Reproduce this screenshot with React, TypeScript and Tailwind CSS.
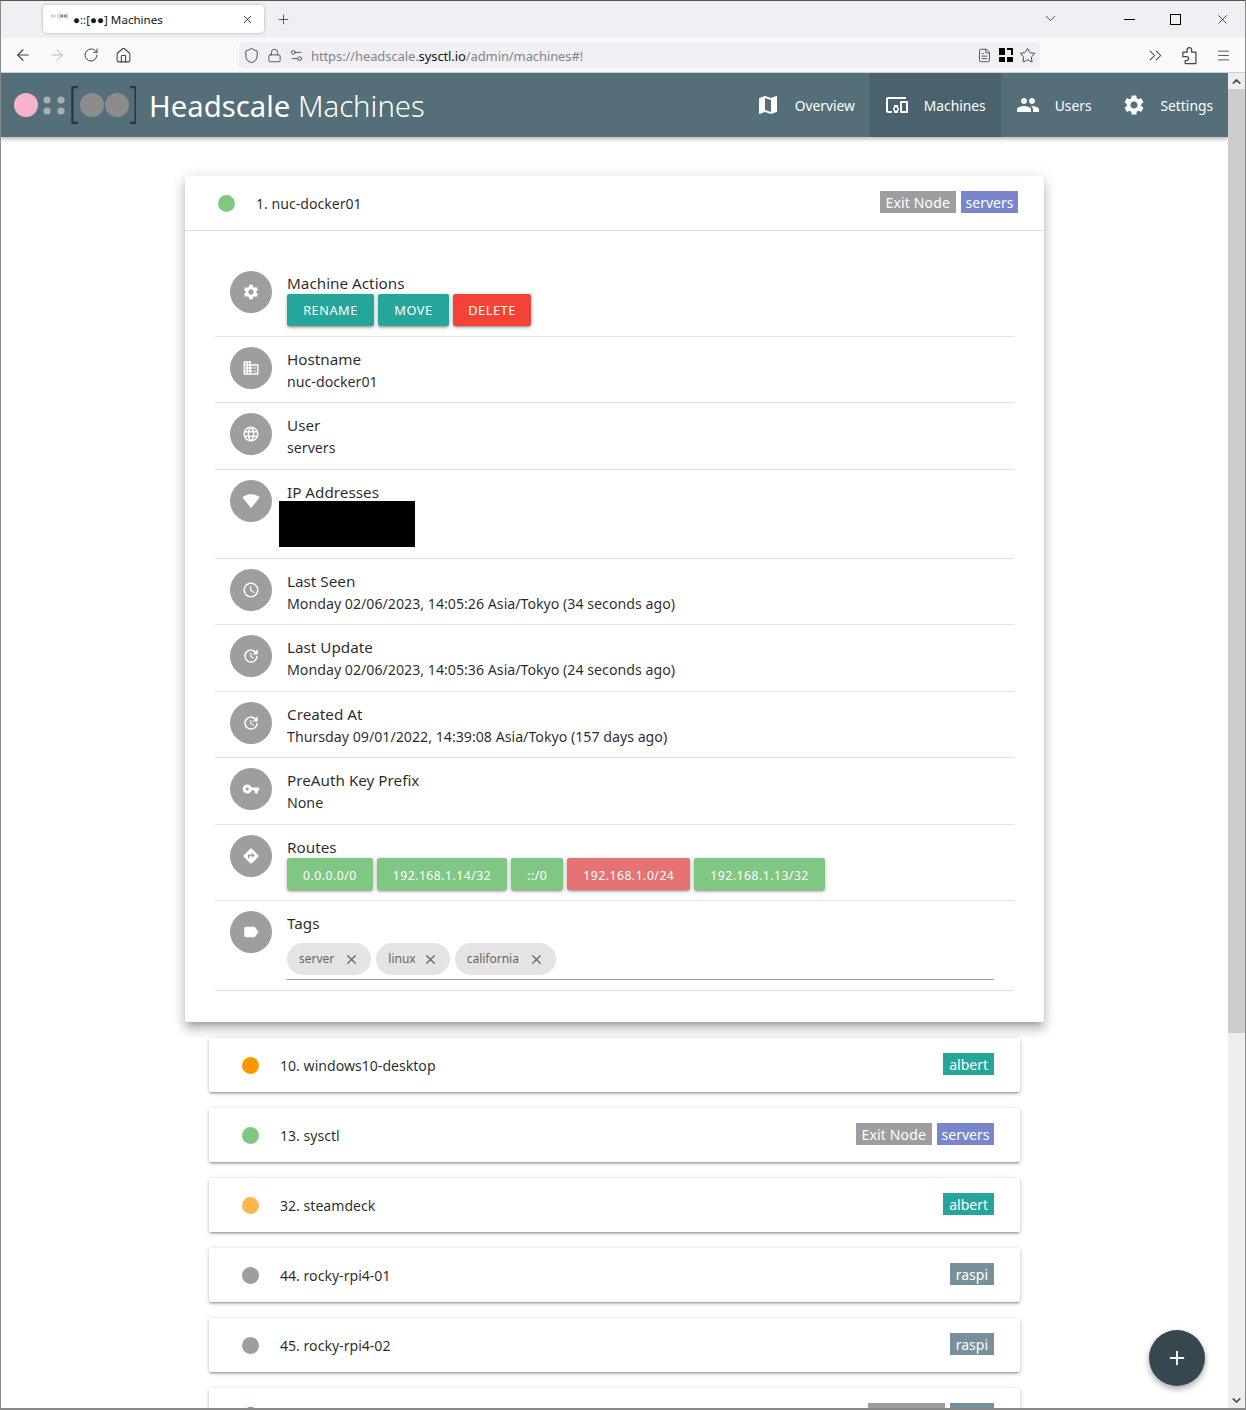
import type { ReactNode } from 'react';
import {
  ArrowLeft,
  ArrowRight,
  ChevronDown,
  ChevronUp,
  ChevronsRight,
  FileText,
  House,
  Lock,
  Menu,
  Plus,
  RotateCw,
  Settings2,
  Shield,
  Star,
  X,
} from 'lucide-react';
import {
  MdAccessTime,
  MdDevicesOther,
  MdDirections,
  MdDomain,
  MdGroup,
  MdLabel,
  MdLanguage,
  MdMap,
  MdSettings,
  MdSignalWifi4Bar,
  MdUpdate,
  MdVpnKey,
} from 'react-icons/md';

function Logo({ className }: { className: string }) {
  return (
    <svg viewBox="0 0 122 38" className={className}>
      <circle cx="12" cy="19" r="12" fill="#f8b3cc" />
      <circle cx="33" cy="14" r="3.6" fill="#a9aeb0" />
      <circle cx="33" cy="25" r="3.6" fill="#a9aeb0" />
      <circle cx="47" cy="14" r="3.6" fill="#a9aeb0" />
      <circle cx="47" cy="25" r="3.6" fill="#a9aeb0" />
      <path d="M64 1.2h-5.6v35.6H64M116 1.2h5.6v35.6H116" fill="none" stroke="#333" strokeWidth="2.2" />
      <circle cx="78" cy="19" r="12" fill="#8c8c8c" />
      <circle cx="103" cy="19" r="12" fill="#8c8c8c" />
    </svg>
  );
}

function ExtensionIcon() {
  return (
    <svg viewBox="0 0 18 20" className="ml-[15px] h-[19px] w-[17px]" fill="none" stroke="currentColor" strokeWidth="1.3">
      <path d="M2 6.5h4.5V4a2.4 2.4 0 0 1 4.8 0v2.5h4.5v12H4.5v-3.2H6a2 2 0 0 0 0-4H2z" strokeLinejoin="round" />
    </svg>
  );
}

function BrowserChrome() {
  return (
    <>
      <div className="flex h-[37px] items-start bg-[#f0f0f4]">
        <div className="ml-[42px] mt-[4px] flex h-[28px] w-[221px] items-center rounded bg-white pl-[8px] pr-[10px] shadow-[0_0_3px_rgba(0,0,0,0.3)]">
          <Logo className="mb-[6px] h-[6px] w-[17px]" />
          <span className="ml-[5px] flex-1 pt-[2px] text-[11.6px] text-[#15141a]">●::[●●] Machines</span>
          <X size={13} strokeWidth={1.5} className="text-[#15141a]" />
        </div>
        <Plus size={15} strokeWidth={1.4} className="ml-[12px] mt-[11px] text-[#45444c]" />
        <ChevronDown size={17} strokeWidth={1.2} className="ml-[751px] mt-[9px] text-[#333]" />
        <div className="ml-[65px] mt-[18px] h-[1px] w-[11px] bg-black" />
        <div className="ml-[35px] mt-[13px] h-[11px] w-[11px] border border-black" />
        <X size={15} strokeWidth={1.1} className="ml-[34px] mt-[11px] text-black" />
      </div>
      <div className="flex h-[34px] items-center bg-[#f9f9fb] text-[#45444c]">
        <ArrowLeft size={18} strokeWidth={1.5} className="ml-[13px]" />
        <ArrowRight size={18} strokeWidth={1.3} className="ml-[16px] text-[#b6b6ba]" />
        <RotateCw size={16} strokeWidth={1.5} className="ml-[17px]" />
        <House size={17} strokeWidth={1.5} className="ml-[16px]" />
        <div className="ml-[107px] flex h-[26px] w-[801px] items-center rounded bg-[#f0f0f4]">
          <Shield size={17} strokeWidth={1.4} className="ml-[4px]" />
          <Lock size={15} strokeWidth={1.4} className="ml-[7px]" />
          <Settings2 size={15} strokeWidth={1.4} className="ml-[7px]" />
          <span className="ml-[7px] flex-1 pt-[3px] text-[13px] tracking-[-0.1px] text-[#83838a]">
            https://headscale.<span className="text-[#15141a]">sysctl.io</span>/admin/machines#!
          </span>
          <FileText size={15} strokeWidth={1.4} />
          <div className="ml-[7px] grid h-[14px] w-[14px] grid-cols-2 gap-[2px]">
            <span className="bg-black" />
            <span className="border-r-2 border-t-2 border-black" />
            <span className="bg-black" />
            <span className="bg-black" />
          </div>
          <Star size={17} strokeWidth={1.4} className="ml-[6px] mr-[4px]" />
        </div>
        <ChevronsRight size={21} strokeWidth={1.2} className="ml-[105px]" />
        <ExtensionIcon />
        <Menu size={15} strokeWidth={1.4} className="ml-[18px]" />
      </div>
    </>
  );
}

function NavItem({ icon, label, active }: { icon: ReactNode; label: string; active?: boolean }) {
  return (
    <a className={`flex h-full items-center gap-[15px] px-[15px] text-[13.8px] text-white ${active ? 'bg-[#4a626e]' : ''}`}>
      <span className="text-[24px]">{icon}</span>
      <span className="pt-[2px]">{label}</span>
    </a>
  );
}

function Header() {
  return (
    <header className="relative z-10 flex h-[64px] shrink-0 items-center bg-[#546e7a] pl-[13px] shadow-[0_2px_4px_rgba(0,0,0,0.3)]">
      <Logo className="h-[38px] w-[122px]" />
      <h1 className="ml-[13px] flex-1 pt-[3px] text-[29.3px] text-white">
        Headscale <span className="font-light">Machines</span>
      </h1>
      <nav className="flex h-full items-center">
        <NavItem icon={<MdMap />} label="Overview" />
        <NavItem icon={<MdDevicesOther />} label="Machines" active />
        <NavItem icon={<MdGroup />} label="Users" />
        <NavItem icon={<MdSettings />} label="Settings" />
      </nav>
    </header>
  );
}

function Badge({ children, color }: { children: ReactNode; color: string }) {
  return <span className={`flex h-[22px] items-center px-[6px] text-[14px] text-white ${color}`}>{children}</span>;
}

function ExitBadge() {
  return (
    <Badge color="bg-[#9e9e9e] tracking-[0.15px]">Exit Node</Badge>
  );
}

function ServersBadge() {
  return <Badge color="w-[57px] justify-center bg-[#7986cb]">servers</Badge>;
}

function MachineHead({ dot, name, children }: { dot: string; name: string; children: ReactNode }) {
  return (
    <>
      <span className={`h-[17px] w-[17px] rounded-full ${dot}`} />
      <span className="ml-[21px] mt-[1px] flex-1 text-[14.1px]">{name}</span>
      <div className="mb-[2px] flex gap-[5px]">{children}</div>
    </>
  );
}

function Row({ icon, title, height, children }: { icon: ReactNode; title: string; height: string; children: ReactNode }) {
  return (
    <li className={`flex gap-[15px] border-b border-[#e0e0e0] pl-[15px] pt-[10px] ${height}`}>
      <span className="flex h-[42px] w-[42px] shrink-0 items-center justify-center rounded-full bg-[#9e9e9e] text-[18px] text-white">
        {icon}
      </span>
      <div className="min-w-0 flex-1">
        <div className="h-[22px] text-[15.25px] leading-[24px]">{title}</div>
        {children}
      </div>
    </li>
  );
}

function Value({ children }: { children: ReactNode }) {
  return <div className="text-[14.2px] leading-[25px]">{children}</div>;
}

function Btn({ children, color, size }: { children: ReactNode; color: string; size: string }) {
  return (
    <button className={`h-[32px] rounded-[2px] tracking-[0.5px] text-white shadow-[0_2px_2px_rgba(0,0,0,0.14),0_3px_1px_-2px_rgba(0,0,0,0.12),0_1px_5px_rgba(0,0,0,0.2)] ${size} ${color}`}>
      {children}
    </button>
  );
}

function ActionBtn({ children, color }: { children: ReactNode; color: string }) {
  return (
    <Btn color={color} size="pt-[2px] text-[12.8px]">
      {children}
    </Btn>
  );
}

function RouteBtn({ children, color }: { children: ReactNode; color: string }) {
  return (
    <Btn color={color} size="px-[16px] pt-[4px] text-[12.2px]">
      {children}
    </Btn>
  );
}

function Chip({ label, gap }: { label: string; gap: string }) {
  return (
    <span className={`flex h-[32px] items-center rounded-[16px] bg-[#e4e4e4] pl-[12px] pr-[12px] text-[12px] text-[#666] ${gap}`}>
      {label}
      <X size={15} strokeWidth={2} />
    </span>
  );
}

function ExpandedMachine() {
  return (
    <section className="relative z-[1] w-[859px] rounded-[2px] bg-white shadow-[0_8px_10px_1px_rgba(0,0,0,0.14),0_3px_14px_2px_rgba(0,0,0,0.12),0_5px_5px_-3px_rgba(0,0,0,0.2)]">
      <div className="flex h-[55px] items-center border-b border-[#ddd] pl-[33px] pr-[26px]">
        <MachineHead dot="bg-[#81c784]" name="1. nuc-docker01">
          <ExitBadge />
          <ServersBadge />
        </MachineHead>
      </div>
      <ul className="mx-[30px] pb-[31px] pt-[30px]">
        <Row icon={<MdSettings />} title="Machine Actions" height="h-[76px]">
          <div className="flex gap-[4px] pt-[1px]">
            <ActionBtn color="w-[87px] bg-[#26a69a]">RENAME</ActionBtn>
            <ActionBtn color="w-[71px] bg-[#26a69a]">MOVE</ActionBtn>
            <ActionBtn color="w-[78px] bg-[#f44336]">DELETE</ActionBtn>
          </div>
        </Row>
        <Row icon={<MdDomain />} title="Hostname" height="h-[66px]">
          <Value>nuc-docker01</Value>
        </Row>
        <Row icon={<MdLanguage />} title="User" height="h-[67px]">
          <Value>servers</Value>
        </Row>
        <Row icon={<MdSignalWifi4Bar />} title="IP Addresses" height="h-[89px]">
          <div className="-ml-[8px] -mt-[1px] h-[46px] w-[136px] bg-black" />
        </Row>
        <Row icon={<MdAccessTime />} title="Last Seen" height="h-[66px]">
          <Value>Monday 02/06/2023, 14:05:26 Asia/Tokyo (34 seconds ago)</Value>
        </Row>
        <Row icon={<MdUpdate />} title="Last Update" height="h-[67px]">
          <Value>Monday 02/06/2023, 14:05:36 Asia/Tokyo (24 seconds ago)</Value>
        </Row>
        <Row icon={<MdUpdate />} title="Created At" height="h-[66px]">
          <Value>Thursday 09/01/2022, 14:39:08 Asia/Tokyo (157 days ago)</Value>
        </Row>
        <Row icon={<MdVpnKey />} title="PreAuth Key Prefix" height="h-[67px]">
          <Value>None</Value>
        </Row>
        <Row icon={<MdDirections />} title="Routes" height="h-[76px]">
          <div className="flex gap-[4px] pt-[1px]">
            <RouteBtn color="bg-[#81c784]">0.0.0.0/0</RouteBtn>
            <RouteBtn color="bg-[#81c784]">192.168.1.14/32</RouteBtn>
            <RouteBtn color="bg-[#81c784]">::/0</RouteBtn>
            <RouteBtn color="bg-[#e57373]">192.168.1.0/24</RouteBtn>
            <RouteBtn color="bg-[#81c784]">192.168.1.13/32</RouteBtn>
          </div>
        </Row>
        <Row icon={<MdLabel />} title="Tags" height="h-[90px]">
          <div className="mr-[20px] mt-[10px] flex h-[37px] gap-[5px] border-b border-[#9e9e9e]">
            <Chip label="server" gap="gap-[10px]" />
            <Chip label="linux" gap="gap-[7px]" />
            <Chip label="california" gap="gap-[10px]" />
          </div>
        </Row>
      </ul>
    </section>
  );
}

function MachineCard({ dot, name, children }: { dot: string; name: string; children: ReactNode }) {
  return (
    <div className="flex h-[54px] w-[811px] shrink-0 items-center rounded-[2px] bg-white pl-[33px] pr-[26px] shadow-[0_2px_2px_rgba(0,0,0,0.14),0_3px_1px_-2px_rgba(0,0,0,0.12),0_1px_5px_rgba(0,0,0,0.2)]">
      <MachineHead dot={dot} name={name}>
        {children}
      </MachineHead>
    </div>
  );
}

export default function App() {
  return (
    <div className="flex h-[1410px] w-[1246px] flex-col overflow-hidden border border-b-2 border-[#8a8a8a] border-t-[#555] font-['Noto_Sans',sans-serif] text-[rgba(0,0,0,0.85)]">
      <BrowserChrome />
      <div className="flex min-h-0 flex-1 border-t border-[#cfcfd8]">
        <main className="relative flex min-w-0 flex-1 flex-col overflow-hidden bg-white">
          <Header />
          <div className="flex flex-col items-center gap-[16px] pt-[39px]">
            <ExpandedMachine />
            <MachineCard dot="bg-[#ff9800]" name="10. windows10-desktop">
              <Badge color="bg-[#26a69a]">albert</Badge>
            </MachineCard>
            <MachineCard dot="bg-[#81c784]" name="13. sysctl">
              <ExitBadge />
              <ServersBadge />
            </MachineCard>
            <MachineCard dot="bg-[#ffb74d]" name="32. steamdeck">
              <Badge color="bg-[#26a69a]">albert</Badge>
            </MachineCard>
            <MachineCard dot="bg-[#9e9e9e]" name="44. rocky-rpi4-01">
              <Badge color="bg-[#78909c]">raspi</Badge>
            </MachineCard>
            <MachineCard dot="bg-[#9e9e9e]" name="45. rocky-rpi4-02">
              <Badge color="bg-[#78909c]">raspi</Badge>
            </MachineCard>
            <MachineCard dot="bg-[#4caf50]" name="">
              <ExitBadge />
              <Badge color="bg-[#78909c]">raspi</Badge>
            </MachineCard>
          </div>
          <button className="absolute bottom-[22px] right-[23px] z-10 flex h-[56px] w-[56px] items-center justify-center rounded-full bg-[#37474f] text-white shadow-[0_3px_6px_rgba(0,0,0,0.35)]">
            <Plus size={22} strokeWidth={2} />
          </button>
        </main>
        <div className="flex w-[17px] shrink-0 flex-col bg-[#eeeeee] text-[#505050]">
          <div className="flex h-[16px] items-center justify-center">
            <ChevronUp size={13} strokeWidth={3} />
          </div>
          <div className="h-[944px] bg-[#cdcdcd]" />
          <div className="flex-1" />
          <div className="flex h-[16px] items-center justify-center">
            <ChevronDown size={13} strokeWidth={3} />
          </div>
        </div>
      </div>
    </div>
  );
}
